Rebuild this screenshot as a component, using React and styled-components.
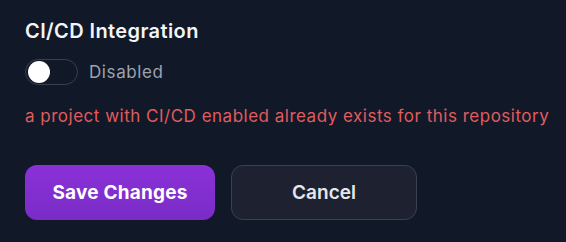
import React, { useState } from "react";
import styled, { createGlobalStyle } from "styled-components";

const GlobalStyle = createGlobalStyle`
  html, body {
    margin: 0;
    padding: 0;
    background: #111827;
  }
  body {
    font-family: Inter, "Noto Sans", sans-serif;
    -webkit-font-smoothing: antialiased;
  }
`;

const Panel = styled.div`
  width: 566px;
  height: 242px;
  box-sizing: border-box;
  padding: 16px 8px 0 25px;
  background: #111827;
  display: flex;
  flex-direction: column;
`;

const Title = styled.h3`
  margin: 0;
  font-size: 20px;
  line-height: 30px;
  font-weight: 600;
  letter-spacing: 0.4px;
  color: #f3f4f6;
`;

const ToggleRow = styled.div`
  display: flex;
  align-items: center;
  gap: 11px;
  margin-top: 13px;
`;

const Track = styled.button`
  width: 53px;
  height: 26px;
  padding: 0;
  border-radius: 13px;
  border: 1px solid #374151;
  background: ${(p) => (p.$on ? "#7c3aed" : "#111827")};
  position: relative;
  cursor: pointer;
  box-sizing: border-box;
`;

const Knob = styled.span`
  position: absolute;
  top: 1px;
  left: ${(p) => (p.$on ? "28px" : "2px")};
  width: 22px;
  height: 22px;
  border-radius: 50%;
  background: #ffffff;
`;

const StateLabel = styled.span`
  font-size: 17px;
  letter-spacing: 0.6px;
  color: #9ca3af;
`;

const ErrorText = styled.p`
  margin: 19px 0 0 0;
  font-size: 17px;
  line-height: 24px;
  letter-spacing: 0.5px;
  white-space: nowrap;
  color: #e05c5e;
`;

const Actions = styled.div`
  display: flex;
  gap: 16px;
  margin-top: 37px;
`;

const Button = styled.button`
  height: 55px;
  border-radius: 12px;
  font-family: Inter, "Noto Sans", sans-serif;
  font-size: 19px;
  cursor: pointer;
  box-sizing: border-box;
`;

const PrimaryButton = styled(Button)`
  width: 190px;
  border: none;
  font-weight: 700;
  letter-spacing: 0.2px;
  color: #ffffff;
  background: linear-gradient(180deg, #8a31d8 0%, #7a2cc6 100%);
`;

const SecondaryButton = styled(Button)`
  width: 186px;
  border: 1px solid #374151;
  font-weight: 600;
  color: #e5e7eb;
  background: #1e2230;
`;

export default function App() {
  const [enabled, setEnabled] = useState(false);
  return (
    <Panel>
      <GlobalStyle />
      <Title>CI/CD Integration</Title>
      <ToggleRow>
        <Track $on={enabled} onClick={() => setEnabled(!enabled)}>
          <Knob $on={enabled} />
        </Track>
        <StateLabel>{enabled ? "Enabled" : "Disabled"}</StateLabel>
      </ToggleRow>
      <ErrorText>a project with CI/CD enabled already exists for this repository</ErrorText>
      <Actions>
        <PrimaryButton>Save Changes</PrimaryButton>
        <SecondaryButton>Cancel</SecondaryButton>
      </Actions>
    </Panel>
  );
}
